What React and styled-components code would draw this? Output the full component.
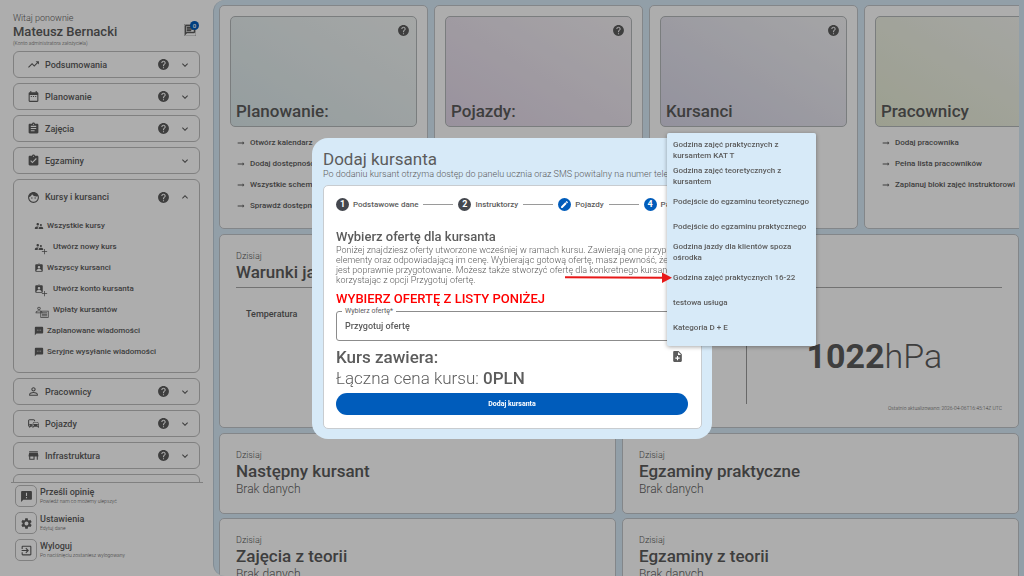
import React from "react";
import styled, { createGlobalStyle, css } from "styled-components";
import {
  MdTrendingUp, MdDateRange, MdAssignment, MdAssignmentTurnedIn, MdFace, MdSupervisorAccount,
  MdAssignmentInd, MdPersonOutline, MdSms, MdCommute, MdStore, MdAnnouncement, MdSettings,
  MdExitToApp, MdHelp, MdExpandMore, MdExpandLess, MdEdit, MdNoteAdd, MdNotes, MdOutlineChat,
  MdArrowRightAlt, MdAdd,
} from "react-icons/md";

const Global = createGlobalStyle`
  *, *::before, *::after { box-sizing: border-box; }
  html, body, #root { height: 100%; }
  body { margin: 0; overflow: hidden; background: #fff; color: #5c5c5c; font-family: Roboto, "Liberation Sans", sans-serif; }
  h1, h2, h3, p, ul, ol { margin: 0; padding: 0; }
  ul, ol { list-style: none; }
  button { font: inherit; color: inherit; background: none; border: 0; padding: 0; text-align: left; }
  a { color: inherit; text-decoration: none; }
  svg { display: block; flex: none; }
`;

const Shell = styled.div`
  display: flex;
  height: 100vh;
  overflow: hidden;
`;

const Sidebar = styled.aside`
  flex: 0 0 213px;
  display: flex;
  flex-direction: column;
  padding: 12px 10px 15px 11px;
`;

const Profile = styled.header`
  display: flex;
  justify-content: space-between;
  padding: 0 4px 4px 2px;
`;

const Greeting = styled.p`
  font-size: 9px;
  line-height: 12px;
  font-weight: 300;
`;

const UserName = styled.h1`
  font-size: 13px;
  line-height: 15px;
  font-weight: 500;
`;

const Tiny = styled.p`
  font-size: 5px;
  line-height: 8px;
  font-weight: 300;
`;

const MessagesButton = styled.button`
  position: relative;
  align-self: center;
  width: 12px;
  height: 12px;
  margin-right: 3px;
`;

const Badge = styled.span`
  position: absolute;
  top: -3px;
  right: -3px;
  width: 9px;
  height: 9px;
  border-radius: 50%;
  background: #005cbb;
  color: #fff;
  font-size: 6px;
  line-height: 9px;
  font-weight: 500;
  text-align: center;
`;

const Menu = styled.nav`
  flex: 1;
  min-height: 0;
  overflow: hidden;
  display: flex;
  flex-direction: column;
  gap: 5px;
  padding: 0 3px 0 2px;
`;

const Section = styled.section`
  flex: none;
  border: 1px solid #bdbdbd;
  border-radius: 6px;
  padding-bottom: ${(p) => (p.$open ? "10px" : "0")};
`;

const SectionButton = styled.button`
  display: flex;
  align-items: center;
  width: 100%;
  height: ${(p) => (p.$open ? "34px" : "25px")};
  padding: 0 8px 0 13px;
  font-size: 9px;
  font-weight: 500;
`;

const SectionName = styled.span`
  flex: 1;
  margin-left: 5px;
`;

const Chevron = styled.span`
  margin-left: 9px;
`;

const SubList = styled.ul`
  padding: 1px 0 0 20px;
`;

const SubLink = styled.a`
  display: flex;
  align-items: center;
  gap: 4px;
  height: 21px;
  font-size: 8px;
  font-weight: 500;
`;

const StackedIcon = styled.span`
  position: relative;
  width: ${(p) => (p.$wide ? "15px" : "9px")};
`;

const CornerIcon = styled.span`
  position: absolute;
  left: 6px;
  top: 5px;
`;

const Footer = styled.footer`
  display: flex;
  flex-direction: column;
  gap: 5px;
  border-top: 1px solid #bdbdbd;
  padding: 2px 4px 0;
`;

const FooterLink = styled.a`
  display: flex;
  align-items: center;
  gap: 3px;
`;

const IconFrame = styled.span`
  display: grid;
  place-items: center;
  width: 22px;
  height: 22px;
  border: 1px solid #bdbdbd;
  border-radius: 5px;
`;

const FooterTitle = styled.p`
  font-size: 9px;
  line-height: 10px;
  font-weight: 500;
`;

const Board = styled.main`
  flex: 1;
  min-width: 0;
  overflow: hidden;
  display: flex;
  flex-direction: column;
  gap: 5px;
  padding: 5px;
  background: #d7eaf8;
  border: 0 solid #c0cfda;
  border-left-width: 1px;
  border-radius: 12px 0 0 12px;
`;

const cardFrame = css`
  background: #fff;
  border: 1px solid #c2c6ca;
  border-radius: 5px;
`;

const TileRow = styled.div`
  flex: none;
  display: flex;
  gap: 6px;
  overflow: hidden;
`;

const Tile = styled.section`
  ${cardFrame}
  flex: 0 0 209px;
  height: 224px;
  padding: 10px;
`;

const Cover = styled.div`
  display: flex;
  flex-direction: column;
  justify-content: space-between;
  height: 111px;
  padding: 7px 6px 5px 5px;
  border: 1px solid #b4b8ba;
  border-radius: 5px;
  background: linear-gradient(to top right, ${(p) => p.$from}, ${(p) => p.$to});
`;

const HelpButton = styled.button`
  align-self: flex-end;
`;

const TileTitle = styled.h2`
  font-size: 17px;
  line-height: 20px;
  font-weight: 500;
`;

const TileLinks = styled.ul`
  padding: 5px 0 0 6px;
`;

const TileLink = styled.a`
  display: flex;
  align-items: center;
  gap: 4px;
  height: 21px;
  font-size: 8px;
  font-weight: 500;
  white-space: nowrap;
`;

const Weather = styled.section`
  ${cardFrame}
  flex: none;
  padding: 15px 16px;
`;

const WeatherBody = styled.div`
  display: grid;
  grid-template-columns: 2fr 1fr;
  height: 117px;
  margin-top: 5px;
  border-top: 1px solid #a8a8a8;
`;

const Reading = styled.div`
  padding: 20px 10px;
  border-right: 1px solid #9a9a9a;
  font-size: 9px;
  line-height: 12px;
  font-weight: 500;
`;

const Pressure = styled.p`
  align-self: end;
  padding-bottom: 26px;
  text-align: center;
  font-size: 34px;
  line-height: 44px;
  font-weight: 300;
`;

const Heavy = styled.strong`
  font-weight: ${(p) => p.$weight};
`;

const Updated = styled(Tiny)`
  text-align: right;
`;

const CardGrid = styled.div`
  flex: none;
  display: grid;
  grid-template-columns: 1fr 1fr;
  gap: 4px 6px;
`;

const Card = styled.section`
  ${cardFrame}
  height: 81px;
  padding: 15px 16px;
`;

const Kicker = styled.p`
  font-size: 9px;
  line-height: 12px;
  font-weight: 300;
`;

const CardTitle = styled.h2`
  font-size: 17px;
  line-height: 20px;
  font-weight: 500;
`;

const CardText = styled.p`
  font-size: 12px;
  line-height: 16px;
  font-weight: 300;
`;

const Backdrop = styled.div`
  position: fixed;
  inset: 0;
  display: grid;
  place-items: center;
  background: rgba(0, 0, 0, 0.32);
`;

const Dialog = styled.div`
  position: relative;
  width: 400px;
  padding: 11px 10px 10px 11px;
  border-radius: 16px;
  background: #d7eaf8;
`;

const DialogTitle = styled.h2`
  font-size: 17px;
  line-height: 20px;
  font-weight: 400;
`;

const DialogNote = styled.p`
  font-size: 9px;
  line-height: 11px;
  font-weight: 300;
  white-space: nowrap;
  overflow: hidden;
`;

const Sheet = styled.form`
  margin-top: 5px;
  padding: 12px 13px 13px 12px;
  background: #fff;
  border: 1px solid #c8ccd0;
  border-radius: 5px;
`;

const Stepper = styled.ol`
  display: flex;
  align-items: center;
  overflow: hidden;
`;

const Step = styled.li`
  display: flex;
  align-items: center;
  gap: 4px;
  flex: none;
  font-size: 8px;
  line-height: 13px;
  font-weight: 500;
`;

const StepMark = styled.span`
  display: grid;
  place-items: center;
  width: 13px;
  height: 13px;
  border-radius: 50%;
  background: ${(p) => (p.$done ? "#44474e" : "#005cbb")};
  color: #fff;
  font-size: 9px;
  line-height: 13px;
  font-weight: 700;
`;

const StepLine = styled.li`
  flex: 0 0 30px;
  margin: 0 5px;
  border-top: 1px solid #9a9a9a;
`;

const OfferTitle = styled.h3`
  margin-top: 18px;
  font-size: 13px;
  line-height: 16px;
  font-weight: 500;
`;

const OfferText = styled.p`
  font-size: 9px;
  line-height: 10px;
  font-weight: 300;
  white-space: nowrap;
`;

const Warning = styled.p`
  margin-top: 6px;
  font-size: 13px;
  line-height: 15px;
  font-weight: 500;
  color: #f00;
`;

const Field = styled.div`
  position: relative;
  margin-top: 5px;
`;

const FieldLabel = styled.label`
  position: absolute;
  left: 6px;
  top: -5px;
  padding: 0 3px;
  background: #fff;
  font-size: 7px;
  line-height: 10px;
`;

const Select = styled.select`
  display: block;
  appearance: none;
  width: 100%;
  height: 30px;
  padding: 0 8px;
  border: 1px solid #8c8c8c;
  border-radius: 3px;
  background: #fff;
  color: inherit;
  font-family: inherit;
  font-size: 9px;
  font-weight: 500;
`;

const SummaryRow = styled.div`
  display: flex;
  align-items: center;
  justify-content: space-between;
  margin-top: 5px;
  padding-right: 4px;
`;

const SummaryTitle = styled.h3`
  font-size: 17px;
  line-height: 22px;
  font-weight: 500;
`;

const Price = styled.p`
  font-size: 17px;
  line-height: 20px;
  font-weight: 300;
`;

const Submit = styled.button`
  display: block;
  width: 100%;
  height: 22px;
  margin-top: 5px;
  border-radius: 11px;
  background: #005cbb;
  color: #fff;
  font-size: 7px;
  font-weight: 700;
  text-align: center;
`;

const Options = styled.ul`
  position: absolute;
  left: 355px;
  top: -5px;
  width: 149px;
  padding: 4px 6px 6px;
  border-radius: 2px;
  background: #d7eaf8;
  box-shadow: 0 1px 4px rgba(0, 0, 0, 0.35);
`;

const Option = styled.li`
  display: flex;
  align-items: center;
  min-height: 25px;
  padding: 2px 0;
  font-size: 8px;
  line-height: 11px;
  font-weight: 500;
`;

const Pointer = styled.svg`
  position: absolute;
  left: 253px;
  top: 134px;
`;

function PaymentIcon({ size }) {
  return (
    <svg width={size} height={size} viewBox="0 0 24 24" fill="none" stroke="currentColor" strokeWidth="2" aria-hidden="true">
      <rect x="2" y="3" width="20" height="17" />
      <path d="M5 7.5h14M5 11.5h14M5 15.5h14" strokeWidth="2.2" />
    </svg>
  );
}

const sections = [
  { id: "summary", name: "Podsumowania", Icon: MdTrendingUp, help: true },
  { id: "planning", name: "Planowanie", Icon: MdDateRange, help: true },
  { id: "classes", name: "Zajęcia", Icon: MdAssignment, help: true },
  { id: "exams", name: "Egzaminy", Icon: MdAssignmentTurnedIn },
  {
    id: "courses", name: "Kursy i kursanci", Icon: MdFace, help: true,
    items: [
      { name: "Wszystkie kursy", Icon: MdSupervisorAccount },
      { name: "Utwórz nowy kurs", Icon: MdSupervisorAccount, Corner: MdAdd },
      { name: "Wszyscy kursanci", Icon: MdAssignmentInd },
      { name: "Utwórz konto kursanta", Icon: MdAssignmentInd, Corner: MdAdd },
      { name: "Wpłaty kursantów", Icon: MdPersonOutline, Corner: PaymentIcon },
      { name: "Zaplanowane wiadomości", Icon: MdSms },
      { name: "Seryjne wysyłanie wiadomości", Icon: MdSms },
    ],
  },
  { id: "staff", name: "Pracownicy", Icon: MdPersonOutline, help: true },
  { id: "vehicles", name: "Pojazdy", Icon: MdCommute, help: true },
  { id: "sites", name: "Infrastruktura", Icon: MdStore, help: true },
  { id: "more", name: "", Icon: MdNotes, help: true },
];

const footerLinks = [
  { name: "Prześli opinię", note: "Powiedź nam co możemy ulepszyć", Icon: MdAnnouncement },
  { name: "Ustawienia", note: "Edytuj dane", Icon: MdSettings },
  { name: "Wyloguj", note: "Po naciśnięciu zostaniesz wylogowany", Icon: MdExitToApp },
];

const tiles = [
  { title: "Planowanie:", from: "#dbe8ea", to: "#f3f6f5", help: true, links: ["Otwórz kalendarz", "Dodaj dostępność", "Wszystkie schematy", "Sprawdź dostępność"] },
  { title: "Pojazdy:", from: "#e2d7e8", to: "#f5f2f5", help: true, links: [] },
  { title: "Kursanci", from: "#d9d7e8", to: "#f3f3f5", help: true, links: [] },
  { title: "Pracownicy", from: "#e6ebd4", to: "#f5f6f3", links: ["Dodaj pracownika", "Pełna lista pracowników", "Zaplanuj bloki zajęć instruktorowi"] },
];

const cards = ["Następny kursant", "Egzaminy praktyczne", "Zajęcia z teorii", "Egzaminy z teorii"];

const offers = [
  "Godzina zajęć praktycznych z kursantem KAT T",
  "Godzina zajęć teoretycznych z kursantem",
  "Podejście do egzaminu teoretycznego",
  "Podejście do egzaminu praktycznego",
  "Godzina jazdy dla klientów spoza ośrodka",
  "Godzina zajęć praktycznych 16-22",
  "testowa usługa",
  "Kategoria D + E",
];

function MenuSection({ name, Icon, help, items }) {
  return (
    <Section $open={!!items}>
      <SectionButton type="button" $open={!!items} aria-expanded={!!items}>
        <Icon size={13} />
        <SectionName>{name}</SectionName>
        {help && <MdHelp size={13} />}
        <Chevron>{items ? <MdExpandLess size={12} /> : <MdExpandMore size={12} />}</Chevron>
      </SectionButton>
      {items && (
        <SubList>
          {items.map(({ name: label, Icon: Sub, Corner }) => (
            <li key={label}>
              <SubLink href="#">
                <StackedIcon $wide={!!Corner}>
                  <Sub size={10} />
                  {Corner && <CornerIcon><Corner size={9} /></CornerIcon>}
                </StackedIcon>
                {label}
              </SubLink>
            </li>
          ))}
        </SubList>
      )}
    </Section>
  );
}

export default function App() {
  return (
    <>
      <Global />
      <Shell>
        <Sidebar>
          <Profile>
            <div>
              <Greeting>Witaj ponownie</Greeting>
              <UserName>Mateusz Bernacki</UserName>
              <Tiny>(Konto administratora założyciela)</Tiny>
            </div>
            <MessagesButton type="button" aria-label="Wiadomości">
              <MdOutlineChat size={12} strokeWidth={1} />
              <Badge>0</Badge>
            </MessagesButton>
          </Profile>
          <Menu>
            {sections.map(({ id, ...s }) => <MenuSection key={id} {...s} />)}
          </Menu>
          <Footer>
            {footerLinks.map(({ name, note, Icon }) => (
              <FooterLink href="#" key={name}>
                <IconFrame><Icon size={13} /></IconFrame>
                <div>
                  <FooterTitle>{name}</FooterTitle>
                  <Tiny>{note}</Tiny>
                </div>
              </FooterLink>
            ))}
          </Footer>
        </Sidebar>
        <Board>
          <TileRow>
            {tiles.map((t) => (
              <Tile key={t.title}>
                <Cover $from={t.from} $to={t.to}>
                  <HelpButton type="button" aria-label="Pomoc"><MdHelp size={13} /></HelpButton>
                  <TileTitle>{t.title}</TileTitle>
                </Cover>
                <TileLinks>
                  {t.links.map((l) => (
                    <li key={l}>
                      <TileLink href="#"><MdArrowRightAlt size={10} />{l}</TileLink>
                    </li>
                  ))}
                </TileLinks>
              </Tile>
            ))}
          </TileRow>
          <Weather>
            <Kicker>Dzisiaj</Kicker>
            <CardTitle>Warunki jazdy</CardTitle>
            <WeatherBody>
              <Reading>Temperatura</Reading>
              <Pressure><Heavy $weight={700}>1022</Heavy>hPa</Pressure>
            </WeatherBody>
            <Updated>Ostatnio aktualizowano: 2026-04-06T16:45:14Z UTC</Updated>
          </Weather>
          <CardGrid>
            {cards.map((c) => (
              <Card key={c}>
                <Kicker>Dzisiaj</Kicker>
                <CardTitle>{c}</CardTitle>
                <CardText>Brak danych</CardText>
              </Card>
            ))}
          </CardGrid>
        </Board>
      </Shell>
      <Backdrop>
        <Dialog role="dialog" aria-labelledby="dialog-title">
          <DialogTitle id="dialog-title">Dodaj kursanta</DialogTitle>
          <DialogNote>Po dodaniu kursant otrzyma dostęp do panelu ucznia oraz SMS powitalny na numer telefonu</DialogNote>
          <Sheet>
            <Stepper>
              <Step><StepMark $done>1</StepMark>Podstawowe dane</Step>
              <StepLine aria-hidden="true" />
              <Step><StepMark $done>2</StepMark>Instruktorzy</Step>
              <StepLine aria-hidden="true" />
              <Step><StepMark><MdEdit size={9} /></StepMark>Pojazdy</Step>
              <StepLine aria-hidden="true" />
              <Step><StepMark>4</StepMark>Pakiet</Step>
            </Stepper>
            <OfferTitle>Wybierz ofertę dla kursanta</OfferTitle>
            <OfferText>
              Poniżej znajdziesz oferty utworzone wcześniej w ramach kursu. Zawierają one przypisane<br />
              elementy oraz odpowiadającą im cenę. Wybierając gotową ofertę, masz pewność, że wszystko<br />
              jest poprawnie przygotowane. Możesz także stworzyć ofertę dla konkretnego kursanta,<br />
              korzystając z opcji Przygotuj ofertę.
            </OfferText>
            <Warning>WYBIERZ OFERTĘ Z LISTY PONIŻEJ</Warning>
            <Field>
              <Select id="offer" defaultValue="custom">
                <option value="custom">Przygotuj ofertę</option>
              </Select>
              <FieldLabel htmlFor="offer">Wybierz ofertę*</FieldLabel>
            </Field>
            <SummaryRow>
              <SummaryTitle>Kurs zawiera:</SummaryTitle>
              <button type="button" aria-label="Dodaj pozycję"><MdNoteAdd size={13} /></button>
            </SummaryRow>
            <Price>Łączna cena kursu: <Heavy $weight={500}>0PLN</Heavy></Price>
            <Submit type="button">Dodaj kursanta</Submit>
          </Sheet>
          <Options role="listbox" aria-label="Usługi">
            {offers.map((o) => <Option role="option" key={o}>{o}</Option>)}
          </Options>
          <Pointer width="108" height="12" viewBox="0 0 108 12" aria-hidden="true">
            <path d="M0 5.2 L99 5.8" stroke="#e81818" strokeWidth="2" />
            <path d="M97 0.5 L107 5.8 L97 11 Z" fill="#e81818" />
          </Pointer>
        </Dialog>
      </Backdrop>
    </>
  );
}
